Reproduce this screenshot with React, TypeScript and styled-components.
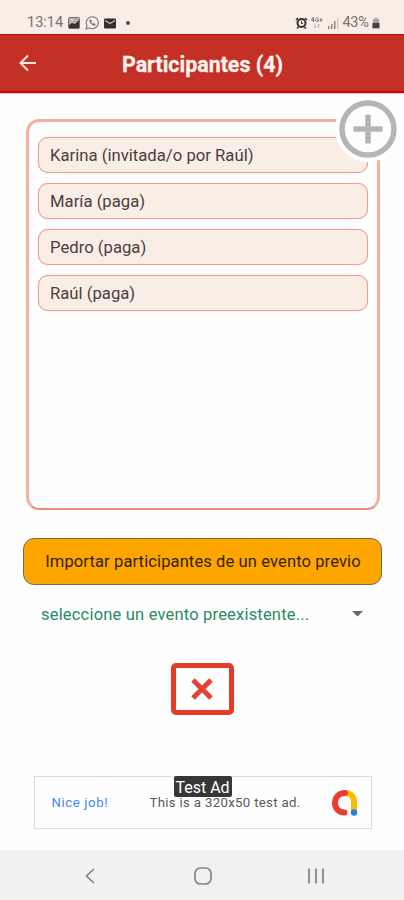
import React from "react";
import styled, { createGlobalStyle } from "styled-components";

const GlobalStyle = createGlobalStyle`
  * { box-sizing: border-box; }
  body { margin: 0; background: #fff; font-family: Roboto, sans-serif; }
  button { font-family: inherit; padding: 0; margin: 0; }
  svg { display: block; flex: none; }
`;

const Screen = styled.div`
  width: 404px;
  height: 900px;
  display: flex;
  flex-direction: column;
  background: #fefefe;
  overflow: hidden;
`;

const StatusBar = styled.div`
  height: 34px;
  flex: none;
  display: flex;
  justify-content: space-between;
  align-items: flex-start;
  padding: 13px 24px 0 27px;
  background: #f8eee5;
`;

const StatusGroup = styled.div<{ $gap: number }>`
  display: flex;
  align-items: center;
  height: 20px;
  gap: ${(p) => p.$gap}px;
`;

const StatusText = styled.span<{ $spacing: number }>`
  font-size: 14.5px;
  line-height: 20px;
  color: #77716c;
  letter-spacing: ${(p) => p.$spacing}px;
`;

const Header = styled.header`
  height: 59px;
  flex: none;
  display: grid;
  grid-template-columns: 56px 1fr 56px;
  align-items: center;
  background: #c43025;
  border-top: 1px solid #b20f08;
  border-bottom: 2px solid #bd0d09;
  box-shadow: 0 1px 1px #f6c5c2;
`;

const BackButton = styled.button`
  border: 0;
  background: none;
  padding-left: 17px;
`;

const Title = styled.h1`
  margin: 3px 0 0 1px;
  text-align: center;
  font-size: 21.4px;
  line-height: 28px;
  font-weight: 700;
  color: #fff4ed;
  white-space: nowrap;
  -webkit-text-stroke: 0.3px #fff4ed;
`;

const Content = styled.main`
  flex: 1;
  display: flex;
  flex-direction: column;
  align-items: center;
  padding-top: 26px;
`;

const Panel = styled.section`
  position: relative;
  width: 354px;
  height: 391px;
  margin-left: 2px;
  padding: 15px 9px;
  border: 3px solid #f5b0a2;
  border-bottom: 2px solid #ef8b79;
  border-radius: 13px;
`;

const AddButton = styled.button`
  position: absolute;
  top: -26px;
  right: -24px;
  width: 66px;
  height: 66px;
  border: 0;
  border-radius: 50%;
  background: #fefefe;
  display: grid;
  place-items: center;
`;

const List = styled.ul`
  list-style: none;
  margin: 0;
  padding: 0;
  display: flex;
  flex-direction: column;
  gap: 10px;
`;

const Item = styled.li`
  height: 36px;
  padding-left: 11px;
  border: 1px solid #ee9f90;
  box-shadow: 0 0 1px #ee9f90;
  border-radius: 10px;
  background: #f8eee6;
  color: #4b403d;
  font-size: 16.7px;
  line-height: 36px;
  white-space: nowrap;
`;

const ImportButton = styled.button`
  width: 359px;
  height: 47px;
  margin: 28px 0 0 1px;
  padding-left: 1px;
  border: 1px solid #766d50;
  border-radius: 11px;
  background: #ffa500;
  color: #302300;
  font-size: 16.5px;
  letter-spacing: 0.12px;
  white-space: nowrap;
`;

const Select = styled.div`
  width: 322px;
  height: 30px;
  margin-top: 14px;
  display: flex;
  align-items: center;
  justify-content: space-between;
  color: #288b63;
  font-size: 16.5px;
  letter-spacing: 0.19px;
`;

const CancelButton = styled.button`
  width: 63px;
  height: 52px;
  margin-top: 34px;
  border: 5px solid #e63b2b;
  border-radius: 5px;
  background: #fefefe;
  display: grid;
  place-items: center;
`;

const AdBanner = styled.aside`
  position: relative;
  width: 338px;
  height: 53px;
  margin-top: 61px;
  margin-left: 1px;
  border: 1px solid #d9dfe0;
  display: grid;
  grid-template-columns: 115px 1fr 40px;
  align-items: center;
  padding-left: 17px;
  font-size: 13.2px;
`;

const AdLink = styled.span`
  color: #4386f5;
  letter-spacing: 0.6px;
`;

const AdCopy = styled.span`
  margin-left: -17px;
  color: #595959;
  white-space: nowrap;
  letter-spacing: 0.33px;
`;

const AdTag = styled.span`
  position: absolute;
  left: 139px;
  top: -1px;
  width: 58px;
  height: 21px;
  border-radius: 2px;
  background: #373737;
  color: #fff;
  font-size: 16px;
  line-height: 23px;
  text-align: center;
  white-space: nowrap;
`;

const NavBar = styled.nav`
  height: 50px;
  flex: none;
  display: grid;
  grid-template-columns: repeat(3, 113px);
  justify-content: center;
  align-items: center;
  justify-items: center;
  background: #f1f1f1;
  padding: 1px 0 0 1px;
`;

const participants = [
  "Karina (invitada/o por Raúl)",
  "María (paga)",
  "Pedro (paga)",
  "Raúl (paga)",
];

const PhotoIcon = () => (
  <svg width="12" height="12" viewBox="0 0 12 12">
    <rect x=".5" y=".5" width="11" height="11" rx="1" fill="#b6b0aa" stroke="#77716c" />
    <path d="M1 8l3-2 3 1 4-4v8H1z" fill="#373431" />
    <circle cx="4" cy="3" r="1" fill="#eee4dc" />
  </svg>
);

const WhatsAppIcon = () => (
  <svg width="14" height="14" viewBox="0 0 14 14" fill="none" stroke="#7b7671">
    <path d="M1 13l1-3.5A6 6 0 1 1 4.500 12z" strokeWidth="1.100" />
    <path d="M4.500 4c0 3 2.500 5.500 5.500 5.500l.4-1.500-1.700-.7-.8.8-2-2 .8-.8-.8-1.700z" fill="#7b7671" strokeWidth=".3" />
  </svg>
);

const MailIcon = () => (
  <svg width="12" height="11" viewBox="0 0 12 11">
    <rect y=".5" width="12" height="10" rx="1" fill="#33302d" />
    <path d="M1 2.500l5 3 5-3" fill="none" stroke="#c6bdb6" strokeWidth="1.200" />
  </svg>
);

const AlarmIcon = () => (
  <svg width="13" height="12" viewBox="0 0 13 12" fill="none" stroke="#36322f">
    <circle cx="6.500" cy="6" r="4" strokeWidth="2" />
    <path d="M1 3l2-2M12 3l-2-2M3.500 10L2 11.500M9.500 10l1.500 1.500" strokeWidth="1.500" />
    <path d="M6.500 4v2.500H8" />
  </svg>
);

const NetworkIcon = () => (
  <svg width="12" height="12" viewBox="0 0 12 12" fill="none" stroke="#77716c">
    <path d="M2.500 0v5M.5 3.500h3M2 .5L.5 3M7.500 1.500C6 0 4.500 1 4.500 2.700S6 5.200 7.500 4V3H6M10 1v4M8.500 3h3" strokeWidth=".9" />
    <path d="M4 7v4M2.800 9.500L4 11l1-1.500M7.500 11V7M6.500 8.500l1-1.500 1 1.500" stroke="#b8b0a9" strokeWidth=".8" />
  </svg>
);

const SignalIcon = () => (
  <svg width="12" height="11" viewBox="0 0 12 11" fill="#8c857f">
    <path d="M1 8h1.500v3H1zM4 6h1.500v5H4zM7 3h1.500v8H7z" />
    <path d="M10 0h1.500v11H10z" fill="#d0c7bf" />
  </svg>
);

const BatteryIcon = () => (
  <svg width="8" height="12" viewBox="0 0 9 12">
    <path d="M3 0h3v1.500h2V6H1V1.500h2z" fill="#aaa29b" />
    <path d="M.5 6h8v6h-8z" fill="#45403c" />
  </svg>
);

const Dot = styled.span`
  width: 4px;
  height: 4px;
  margin-left: 5px;
  border-radius: 50%;
  background: #4d4844;
`;

export default function App() {
  return (
    <Screen>
      <GlobalStyle />
      <StatusBar>
        <StatusGroup $gap={5}>
          <StatusText $spacing={0}>13:14</StatusText>
          <PhotoIcon />
          <WhatsAppIcon />
          <MailIcon />
          <Dot />
        </StatusGroup>
        <StatusGroup $gap={3.5}>
          <AlarmIcon />
          <NetworkIcon />
          <SignalIcon />
          <StatusText $spacing={-0.3}>43%</StatusText>
          <BatteryIcon />
        </StatusGroup>
      </StatusBar>
      <Header>
        <BackButton aria-label="Volver">
          <svg width="22" height="20" viewBox="0 0 22 20" fill="none" stroke="#ffe9dc" strokeWidth="2">
            <path d="M19 10H4M11 2.500L3.500 10l7.500 7.500" />
          </svg>
        </BackButton>
        <Title>Participantes (4)</Title>
      </Header>
      <Content>
        <Panel>
          <List>
            {participants.map((name) => (
              <Item key={name}>{name}</Item>
            ))}
          </List>
          <AddButton aria-label="Agregar">
            <svg width="58" height="58" viewBox="0 0 58 58" fill="none" stroke="#b5b5b5">
              <circle cx="29" cy="29" r="26" strokeWidth="5.500" />
              <path d="M29 14.500v29M14.500 29h29" strokeWidth="5.500" />
            </svg>
          </AddButton>
        </Panel>
        <ImportButton>Importar participantes de un evento previo</ImportButton>
        <Select>
          <span>seleccione un evento preexistente...</span>
          <svg width="11" height="6" viewBox="0 0 11 6">
            <path d="M0 0h11L5.500 5.500z" fill="#686868" />
          </svg>
        </Select>
        <CancelButton aria-label="Cancelar">
          <svg width="24" height="24" viewBox="0 0 24 24" fill="none" stroke="#e24334" strokeWidth="5">
            <path d="M3 3l18 18M21 3L3 21" />
          </svg>
        </CancelButton>
        <AdBanner>
          <AdLink>Nice job!</AdLink>
          <AdCopy>This is a 320x50 test ad.</AdCopy>
          <svg width="28" height="28" viewBox="0 0 28 28" fill="none" strokeWidth="6" strokeLinecap="round">
            <path d="M14 4c6 0 9 4 9 9v9" stroke="#fbbc04" />
            <path d="M14 4C7.500 4 4 8.500 4 14s4 9.500 9.500 9.500" stroke="#ea3d2f" />
            <circle cx="23" cy="23.500" r="3.200" fill="#287de1" />
          </svg>
          <AdTag>Test Ad</AdTag>
        </AdBanner>
      </Content>
      <NavBar>
        <svg width="12" height="18" viewBox="0 0 12 18" fill="none" stroke="#858585" strokeWidth="1.700">
          <path d="M10 2L2.500 9l7.500 7" />
        </svg>
        <svg width="20" height="20" viewBox="0 0 20 20" fill="none" stroke="#858585" strokeWidth="1.700">
          <rect x="2" y="2" width="16" height="16" rx="5.500" />
        </svg>
        <svg width="18" height="18" viewBox="0 0 18 18" stroke="#909090" strokeWidth="2">
          <path d="M2 1.500v15M9 1.500v15M16 1.500v15" />
        </svg>
      </NavBar>
    </Screen>
  );
}
